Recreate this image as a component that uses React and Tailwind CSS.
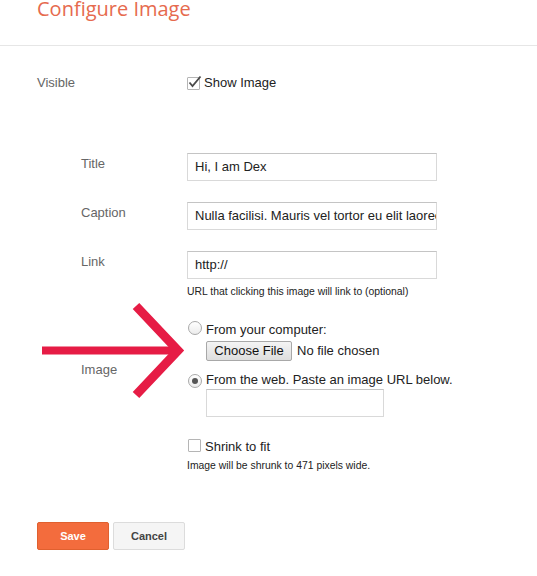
import React from "react";

function CheckBox({ checked }) {
  return (
    <span className="relative inline-block w-[13px] h-[13px] border border-[#b5b5b5] bg-white rounded-[1px] shrink-0">
      {checked && (
        <svg className="absolute left-[0px] top-[-3px]" width="14" height="14" viewBox="0 0 14 14">
          <path d="M1.5 7.5 L4.5 11 L12.5 1.5" fill="none" stroke="#4a4a4a" strokeWidth="1.8" />
        </svg>
      )}
    </span>
  );
}

function Radio({ checked }) {
  return (
    <span className="relative inline-flex items-center justify-center w-[14px] h-[14px] rounded-full border border-[#a9a9a9] bg-gradient-to-b from-[#ffffff] to-[#ececec] shrink-0">
      {checked && <span className="w-[6px] h-[6px] rounded-full bg-[#555555]" />}
    </span>
  );
}

function Field({ value }) {
  return (
    <div className="w-[250px] h-[28px] border border-[#d9d9d9] border-t-[#c4c4c4] pl-[7px] flex items-center overflow-hidden whitespace-nowrap text-[13px] text-[#222]">
      {value}
    </div>
  );
}

export default function App() {
  return (
    <div
      className="relative w-[537px] h-[576px] bg-white overflow-hidden text-[13px] leading-[16px]"
      style={{ fontFamily: '"Liberation Sans", Arial, sans-serif' }}
    >
      <div className="h-[46px] border-b border-[#e6e6e6] pl-[37px]">
        <h1
          className="text-[20px] leading-[18px] text-[#e66a4e] font-normal"
          style={{ fontFamily: '"Open Sans", sans-serif' }}
        >
          Configure Image
        </h1>
      </div>

      <div className="pt-[29px] pl-[37px]">
        <div className="flex items-center">
          <div className="w-[150px] text-[#666]">Visible</div>
          <CheckBox checked />
          <span className="ml-[4px] text-[#222]">Show Image</span>
        </div>

        <div className="mt-[62px] pl-[44px]">
          <div className="flex">
            <div className="w-[106px] pt-[3px] text-[#666]">Title</div>
            <Field value="Hi, I am Dex" />
          </div>
          <div className="flex mt-[21px]">
            <div className="w-[106px] pt-[3px] text-[#666]">Caption</div>
            <Field value="Nulla facilisi. Mauris vel tortor eu elit laoreet rhoncus." />
          </div>
          <div className="flex mt-[21px]">
            <div className="w-[106px] pt-[3px] text-[#666]">Link</div>
            <div>
              <Field value="http://" />
              <div className="mt-[7px] text-[10.4px] leading-[12px] text-[#222]">
                URL that clicking this image will link to (optional)
              </div>
            </div>
          </div>

          <div className="flex items-center mt-[24px]">
            <div className="w-[106px] text-[#666]">Image</div>
            <div>
              <div className="flex items-center h-[16px]">
                <span className="ml-[1px]"><Radio /></span>
                <span className="ml-[4px] text-[#222]">From your computer:</span>
              </div>
              <div className="flex items-center mt-[3px] pl-[19px]">
                <div className="w-[86px] h-[20px] flex items-center justify-center border border-[#a8a8a8] rounded-[2px] bg-gradient-to-b from-[#f4f4f4] to-[#dedede] text-[#111]">
                  Choose File
                </div>
                <span className="ml-[5px] text-[#222]">No file chosen</span>
              </div>
              <div className="flex items-center h-[16px] mt-[11px]">
                <span className="ml-[1px]"><Radio checked /></span>
                <span className="ml-[4px] text-[#222]">From the web. Paste an image URL below.</span>
              </div>
              <div className="ml-[19px] mt-[1px] w-[178px] h-[28px] border border-[#d9d9d9] border-t-[#c4c4c4]" />
            </div>
          </div>

          <div className="pl-[106px] mt-[22px]">
            <div className="flex items-center h-[16px]">
              <span className="ml-[1px]"><CheckBox /></span>
              <span className="ml-[4px] text-[#222]">Shrink to fit</span>
            </div>
            <div className="mt-[5px] text-[10.4px] leading-[12px] text-[#222]">
              Image will be shrunk to 471 pixels wide.
            </div>
          </div>
        </div>

        <div className="flex mt-[50px]">
          <div className="w-[72px] h-[28px] flex items-center justify-center rounded-[2px] bg-[#f36c3d] border border-[#e0602f] text-white font-bold text-[11px]">
            Save
          </div>
          <div className="ml-[4px] w-[72px] h-[28px] flex items-center justify-center rounded-[2px] bg-[#f5f5f5] border border-[#dcdcdc] text-[#444] font-bold text-[11px]">
            Cancel
          </div>
        </div>
      </div>

      <svg
        className="absolute left-[38px] top-[300px] pointer-events-none"
        width="150"
        height="100"
        viewBox="38 300 150 100"
      >
        <line x1="42" y1="350.5" x2="176" y2="350.5" stroke="#e61c45" strokeWidth="8" />
        <polyline
          points="136,306 178,350.5 136,395"
          fill="none"
          stroke="#e61c45"
          strokeWidth="9"
          strokeLinejoin="miter"
        />
      </svg>
    </div>
  );
}
